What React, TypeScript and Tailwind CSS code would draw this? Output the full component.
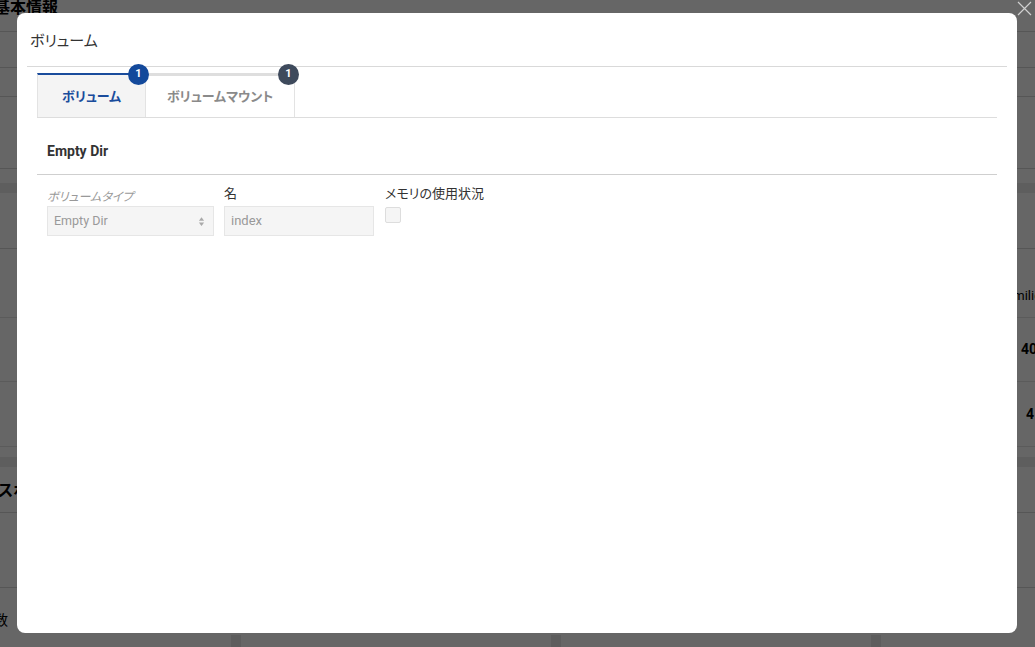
import React from "react";

const font = { fontFamily: 'Roboto, "Noto Sans CJK JP", sans-serif' };

function Row({ h, children, className = "" }: { h: string; children?: React.ReactNode; className?: string }) {
  return <div className={`flex shrink-0 items-center justify-between border-b border-[#d8d8d8] ${h} ${className}`}>{children}</div>;
}

function Background() {
  return (
    <div className="absolute inset-0 flex flex-col overflow-hidden bg-white">
      <Row h="h-[32px]" className="items-start">
        <span className="-ml-[6px] -mt-[4px] text-[16px] font-bold text-black">基本情報</span>
      </Row>
      <Row h="h-[36px]" />
      <Row h="h-[29px]" />
      <Row h="h-[72px]" />
      <div className="h-[14px] shrink-0" />
      <div className="h-[10px] shrink-0 bg-[#ececec]" />
      <Row h="h-[56px]" />
      <Row h="h-[69px]" className="border-[#e4e4e4]">
        <span />
        <span className="-mr-[6px] pt-[26px] text-[13px] text-black">milic</span>
      </Row>
      <Row h="h-[64px]" className="border-[#e4e4e4]">
        <span />
        <span className="-mr-[2px] text-[14px] font-bold text-black">40</span>
      </Row>
      <Row h="h-[65px]" className="border-[#e4e4e4]">
        <span />
        <span className="mr-[1px] text-[14px] font-bold text-black">4</span>
      </Row>
      <div className="h-[10px] shrink-0" />
      <div className="h-[10px] shrink-0 bg-[#ececec]" />
      <Row h="h-[46px]" className="items-start">
        <span className="-ml-[2px] pt-[12px] text-[16px] font-bold text-black">スポ</span>
      </Row>
      <Row h="h-[75px]" />
      <div className="flex shrink-0 pt-[22px]">
        <span className="-ml-[6px] text-[14px] text-black">数</span>
      </div>
      <div className="flex flex-1 pt-[4px]">
        <div className="w-[231px]" />
        <div className="w-[10px] bg-[#e8e8e8]" />
        <div className="w-[310px]" />
        <div className="w-[10px] bg-[#e8e8e8]" />
        <div className="w-[310px]" />
        <div className="w-[10px] bg-[#e8e8e8]" />
        <div className="flex-1" />
      </div>
    </div>
  );
}

export default function App() {
  return (
    <div className="relative h-[647px] w-[1035px] overflow-hidden [font-feature-settings:'palt']" style={font}>
      <Background />
      <div className="absolute inset-0 bg-black/60" />
      {/* close button */}
      <button className="absolute right-[3px] top-[1px] h-[16px] w-[16px]">
        <svg viewBox="0 0 16 16" className="h-[16px] w-[16px]" stroke="#d0d0d0" strokeWidth="1.2" fill="none">
          <path d="M2 1 L15 14 M15 1 L2 14" />
        </svg>
      </button>
      {/* modal */}
      <div className="absolute left-[17px] top-[13px] flex h-[620px] w-[1000px] flex-col rounded-[8px] bg-white">
        <div className="mx-[10px] border-b border-[#d9d9d9] pb-[14px] pl-[3px] pt-[17px]">
          <div className="text-[15px] leading-[22px] text-[#333]">ボリューム</div>
        </div>
        <div className="px-[20px] pt-[6px]">
          {/* tabs */}
          <div className="flex border-b border-[#dddddd]">
            <div className="relative flex h-[44px] w-[108px] items-center justify-center border-l border-[#e3e3e3] border-t-2 border-t-[#1a4c9c] bg-[#f4f4f4]">
              <span className="pt-[1px] text-[13px] font-bold text-[#1a4c9c]">ボリューム</span>
              <span className="absolute right-[-4px] top-[-11px] z-10 flex h-[21px] w-[21px] items-center justify-center rounded-full bg-[#13499b] text-[11px] font-bold text-white">1</span>
            </div>
            <div className="relative flex h-[44px] w-[150px] items-center justify-center border-l border-r border-[#e3e3e3] border-t-[3px] border-t-[#dedede] bg-white">
              <span className="text-[13px] font-bold text-[#8a8a8a]">ボリュームマウント</span>
              <span className="absolute right-[-5px] top-[-12px] z-10 flex h-[21px] w-[21px] items-center justify-center rounded-full bg-[#3e4a5c] text-[11px] font-bold text-white">1</span>
            </div>
          </div>
          {/* section */}
          <div className="border-b border-[#cfcfcf] px-[10px] pb-[13px] pt-[23px]">
            <div className="text-[14px] font-bold leading-[20px] text-[#333]">Empty Dir</div>
          </div>
          <div className="flex gap-[10px] px-[10px] pt-[10px]">
            <div className="flex w-[167px] flex-col">
              <div className="mt-[3px] h-[18px] text-[12px] italic leading-[18px] text-[#999]">ボリュームタイプ</div>
              <div className="flex h-[30px] items-center justify-between border border-[#e6e6e6] bg-[#f5f5f5] pl-[6px] pr-[8px]">
                <span className="text-[12.5px] text-[#999]">Empty Dir</span>
                <svg viewBox="0 0 8 12" className="h-[11px] w-[7px]" fill="#aaa">
                  <path d="M4 1 L7 5 L1 5 Z M4 11 L7 7 L1 7 Z" />
                </svg>
              </div>
            </div>
            <div className="flex w-[150px] flex-col">
              <div className="h-[21px] text-[13px] leading-[18px] text-[#333]">名</div>
              <div className="flex h-[30px] items-center border border-[#e6e6e6] bg-[#f5f5f5] pl-[6px]">
                <span className="text-[13px] text-[#999]">index</span>
              </div>
            </div>
            <div className="flex flex-col pl-[1px]">
              <div className="h-[20px] text-[13px] leading-[18px] text-[#333]">メモリの使用状況</div>
              <div className="mt-[2px] h-[16px] w-[16px] rounded-[2px] border border-[#dddddd] bg-[#f5f5f5]" />
            </div>
          </div>
        </div>
      </div>
    </div>
  );
}
